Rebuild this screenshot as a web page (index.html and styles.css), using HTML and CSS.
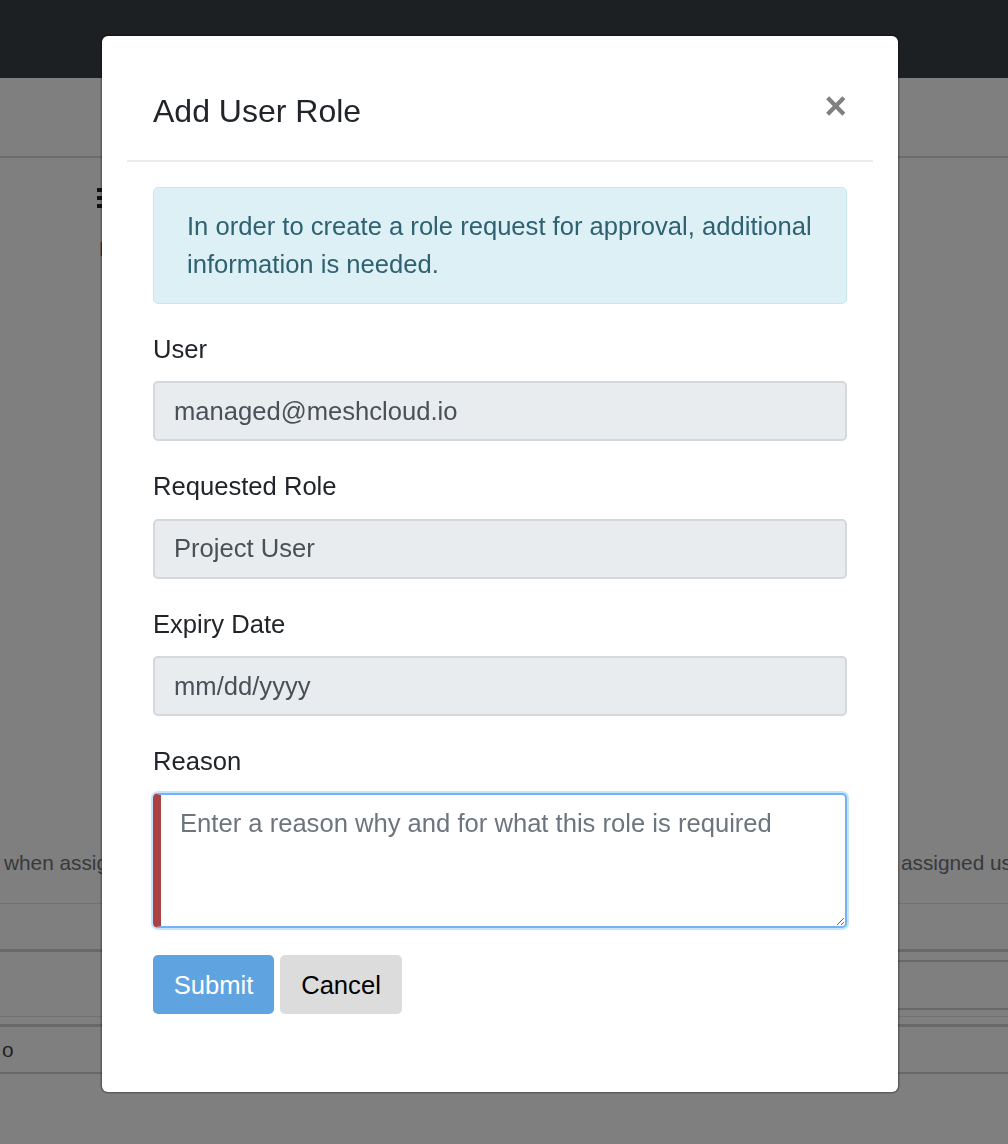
FILE: index.html
```html
<!DOCTYPE html>
<html lang="en">
<head>
<meta charset="utf-8">
<title>Add User Role</title>
<link rel="stylesheet" href="styles.css">
</head>
<body>
<div class="page">
  <nav class="navbar"></nav>
  <div class="subbar"></div>
  <div class="content">
    <div class="title-row">
      <svg class="list-icon" width="24" height="22" viewBox="0 0 24 22">
        <rect x="0" y="0" width="5" height="4" fill="#222"/>
        <rect x="0" y="8" width="5" height="4" fill="#222"/>
        <rect x="0" y="16" width="5" height="4" fill="#222"/>
        <rect x="8" y="0" width="16" height="4" fill="#222"/>
        <rect x="8" y="8" width="16" height="4" fill="#222"/>
        <rect x="8" y="16" width="16" height="4" fill="#222"/>
      </svg>
    </div>
    <div class="desc">Manage</div>
    <div class="hint">
      <span class="hint-left">when assigning a role, an approval may be required before it is</span>
      <span class="hint-right">assigned users</span>
    </div>
    <div class="tables">
      <div class="col col-left">
        <div class="r thin h45"></div>
        <div class="r thick h64"></div>
        <div class="r thin h7"></div>
        <div class="r thick h45 cell">o</div>
        <div class="r mid"></div>
      </div>
      <div class="col col-right">
        <div class="r thin h45"></div>
        <div class="r thick h8"></div>
        <div class="r mid h46"></div>
        <div class="r mid h6"></div>
        <div class="r thin h7"></div>
        <div class="r thick h45"></div>
        <div class="r mid"></div>
      </div>
    </div>
  </div>
</div>

<div class="backdrop"></div>

<div class="modal">
  <div class="modal-header">
    <h5 class="modal-title">Add User Role</h5>
    <button class="close" type="button" aria-label="Close">×</button>
  </div>
  <div class="modal-body">
    <div class="alert">In order to create a role request for approval, additional<br>information is needed.</div>
    <form class="form">
      <div class="form-group">
        <label class="label">User</label>
        <div class="input">managed@meshcloud.io</div>
      </div>
      <div class="form-group">
        <label class="label">Requested Role</label>
        <div class="input">Project User</div>
      </div>
      <div class="form-group">
        <label class="label">Expiry Date</label>
        <div class="input">mm/dd/yyyy</div>
      </div>
      <div class="form-group">
        <label class="label">Reason</label>
        <textarea class="textarea" placeholder="Enter a reason why and for what this role is required"></textarea>
      </div>
      <div class="form-group buttons">
        <button class="btn btn-submit" type="button">Submit</button>
        <button class="btn btn-cancel" type="button">Cancel</button>
      </div>
    </form>
  </div>
</div>
</body>
</html>
```

FILE: styles.css
```css
html, body {
  margin: 0;
  padding: 0;
}

body {
  width: 1008px;
  height: 1144px;
  overflow: hidden;
  background: #ffffff;
  font-family: "Liberation Sans", Arial, sans-serif;
  color: #212529;
}

/* ---------- background page ---------- */
.page {
  width: 1008px;
}

.navbar {
  height: 78px;
  background: #3a4046;
}

.subbar {
  height: 78px;
  border-bottom: 2px solid #d6d6d6;
}

.content {
  display: flex;
  flex-direction: column;
}

.title-row {
  margin-top: 30px;
  padding-left: 97px;
  height: 22px;
}

.list-icon {
  display: block;
}

.desc {
  margin-top: 24px;
  padding-left: 99px;
  font-size: 20.8px;
  line-height: 30px;
  color: #6b7580;
  white-space: nowrap;
}

.hint {
  margin-top: 584px;
  display: flex;
  white-space: nowrap;
  font-size: 20.8px;
  line-height: 30px;
  color: #6c757d;
  overflow: hidden;
}

.hint-left {
  width: 897px;
  padding-left: 4px;
  flex: none;
  overflow: hidden;
}

.hint-right {
  flex: 1;
  overflow: hidden;
}

.tables {
  margin-top: 25px;
  display: flex;
}

.col {
  flex: 1;
  display: flex;
  flex-direction: column;
}

.r.thin { border-top: 1px solid #dee2e6; }
.r.thick { border-top: 3px solid #cdd0d3; }
.r.mid { border-top: 2px solid #cdd0d3; }
.h45 { height: 45px; }
.h46 { height: 46px; }
.h64 { height: 64px; }
.h8 { height: 8px; }
.h7 { height: 7px; }
.h6 { height: 6px; }

.cell {
  font-size: 20.8px;
  line-height: 45px;
  color: #444;
  padding-left: 2px;
}

/* ---------- overlay ---------- */
.backdrop {
  position: fixed;
  inset: 0;
  background: rgba(0, 0, 0, 0.5);
}

/* ---------- modal ---------- */
.modal {
  position: fixed;
  top: 36px;
  left: 102px;
  width: 796px;
  box-sizing: border-box;
  background: #ffffff;
  border-radius: 6px;
  box-shadow: 0 0 0 1.5px rgba(0, 0, 0, 0.28);
  padding: 26px 25px;
}

.modal-header {
  display: flex;
  align-items: flex-start;
  padding: 25px 26px;
  border-bottom: 2px solid #e9ecef;
}

.modal-title {
  margin: 0;
  font-size: 32px;
  font-weight: 500;
  line-height: 48px;
  color: #212529;
}

.close {
  margin: -25px -26px -25px auto;
  padding: 25px 26px;
  background: transparent;
  border: 0;
  font-family: "Liberation Sans", Arial, sans-serif;
  font-size: 38.4px;
  font-weight: 700;
  line-height: 1;
  color: #808080;
  cursor: pointer;
}

.modal-body {
  padding: 25px 26px 26px;
}

.alert {
  background: #ddf0f6;
  border: 1px solid #c9e7f0;
  border-radius: 5px;
  padding: 19px 33px;
  color: #2f6170;
  font-size: 25.6px;
  line-height: 38.4px;
  margin-bottom: 26px;
}

.form {
  margin: 0;
}

.form-group {
  margin-bottom: 26px;
}

.label {
  display: inline-block;
  font-size: 25.6px;
  line-height: 38.4px;
  margin-bottom: 13px;
  color: #212529;
}

.input {
  box-sizing: border-box;
  height: 60px;
  display: flex;
  align-items: center;
  padding: 0 19px;
  background: #e9ecef;
  border: 2px solid #d3d8dd;
  border-radius: 5px;
  font-size: 25.6px;
  color: #495057;
}

.textarea {
  display: block;
  box-sizing: border-box;
  width: 100%;
  height: 135px;
  margin: 0;
  padding: 9px 19px;
  font-family: "Liberation Sans", Arial, sans-serif;
  font-size: 25.6px;
  line-height: 38.4px;
  color: #495057;
  background: #ffffff;
  border: 2px solid #74b4f4;
  border-left: 8px solid #a94442;
  border-radius: 5px;
  box-shadow: 0 0 0 2px rgba(0, 123, 255, 0.22);
  outline: none;
  resize: vertical;
}

.textarea::placeholder {
  color: #6c757d;
  opacity: 1;
}

.buttons {
  display: flex;
  gap: 6px;
  padding-top: 1px;
}

.btn {
  box-sizing: border-box;
  height: 59px;
  padding: 0 19px;
  border: 0;
  border-radius: 5px;
  font-family: "Liberation Sans", Arial, sans-serif;
  font-size: 25.6px;
  line-height: 38.4px;
  cursor: pointer;
}

.btn-submit {
  width: 121px;
  background: #5fa3e0;
  color: #ffffff;
}

.btn-cancel {
  width: 122px;
  background: #dcdcdc;
  color: #000000;
}
```
